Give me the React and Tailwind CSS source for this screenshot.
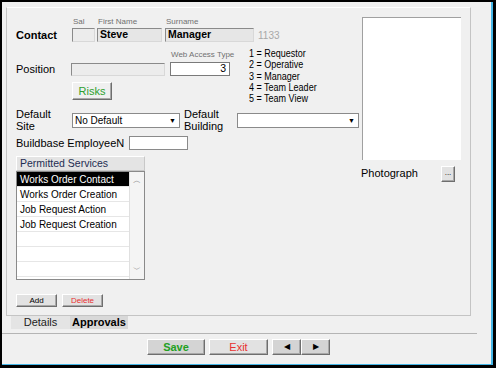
import React from "react";

const font = { fontFamily: '"Liberation Sans", Arial, sans-serif' };

function Sunken({ className = "", children }) {
  return (
    <div
      className={`border border-t-[#8a8a8a] border-l-[#8a8a8a] border-r-[#d8d8d8] border-b-[#d8d8d8] ${className}`}
    >
      {children}
    </div>
  );
}

function Combo({ className = "", value = "" }) {
  return (
    <div className={`flex items-center justify-between border border-[#8a8a8a] bg-white pl-[2px] pr-[3px] text-[10px] ${className}`}>
      <span>{value}</span>
      <span className="text-[7px] leading-none">▼</span>
    </div>
  );
}

function Btn({ className = "", children }) {
  return (
    <div
      className={`flex items-center justify-center border border-t-white border-l-white border-r-[#6e6e6e] border-b-[#6e6e6e] shadow-[inset_-1px_-1px_0_#a8a8a8] ${className}`}
    >
      {children}
    </div>
  );
}

export default function App() {
  const services = ["Works Order Contact", "Works Order Creation", "Job Request Action", "Job Request Creation", "", "", ""];

  return (
    <div style={font} className="h-[368px] w-[496px] overflow-hidden border-l-2 border-t-2 border-r-[3px] border-b-[3px] border-black bg-[#f0f0f0] text-black">
      <div className="flex h-full flex-col border-r-2 border-b border-[#45b6e6]">
        {/* main panel */}
        <div className="ml-[4px] mt-[5px] flex h-[309px] w-[465px] border border-t-white border-l-[#c4c4c4] border-r-[#c4c4c4] border-b-[#c4c4c4] pl-[9px] pt-[9px]">
          {/* left form */}
          <div className="flex w-[345px] flex-col">
            <div className="flex h-[11px] items-start text-[8px] leading-[10px] text-[#707070]">
              <div className="w-[57px]" />
              <div className="w-[25px]">Sal</div>
              <div className="w-[68px]">First Name</div>
              <div>Surname</div>
            </div>
            <div className="flex h-[14px] items-center">
              <div className="w-[56px] text-[11px] font-bold">Contact</div>
              <Sunken className="h-[14px] w-[23px] bg-[#ececec]" />
              <Sunken className="ml-[2px] flex h-[14px] w-[65px] items-center bg-[#e6e6e6] pl-[2px] text-[10.5px] font-bold">Steve</Sunken>
              <Sunken className="ml-[3px] flex h-[14px] w-[89px] items-center bg-[#e6e6e6] pl-[2px] text-[10.5px] font-bold">Manager</Sunken>
              <div className="ml-[4px] text-[10px] text-[#a8a8a8]">1133</div>
            </div>

            <div className="mt-[6px] flex">
              <div className="flex w-[233px] flex-col">
                <div className="h-[14px] pl-[155px] pt-[2px] text-[8px] leading-[10px] text-[#707070]">Web Access Type</div>
                <div className="flex h-[14px] items-center">
                  <div className="w-[55px] text-[11px]">Position</div>
                  <Sunken className="h-[13px] w-[94px] bg-[#ececec]" />
                  <div className="ml-[5px] flex h-[14px] w-[60px] items-center justify-end border border-[#7a7a7a] bg-white pr-[3px] text-[10.5px]">3</div>
                </div>
                <Btn className="ml-[56px] mt-[6px] h-[18px] w-[40px] bg-[#f0f0f0] text-[11px] text-[#2ea02e]">Risks</Btn>
              </div>
              <div className="origin-left scale-x-[0.9] whitespace-nowrap text-[10px] leading-[11.3px]">
                <div>1 = Requestor</div>
                <div>2 = Operative</div>
                <div>3 = Manager</div>
                <div>4 = Team Leader</div>
                <div>5 = Team View</div>
              </div>
            </div>

            <div className="mt-[3px] flex items-start">
              <div className="w-[56px] pt-[1px] text-[11px] leading-[12px]">
                Default
                <br />
                Site
              </div>
              <Combo className="mt-[6px] h-[15px] w-[108px]" value="No Default" />
              <div className="ml-[4px] w-[53px] pt-[1px] text-[11px] leading-[12px]">
                Default
                <br />
                Building
              </div>
              <Combo className="mt-[6px] h-[15px] w-[122px]" />
            </div>

            <div className="mt-[4px] flex h-[14px] items-center">
              <div className="w-[113px] text-[11px]">Buildbase EmployeeN</div>
              <div className="h-[14px] w-[59px] border border-[#8a8a8a] bg-white" />
            </div>

            <div className="mt-[6px] flex h-[15px] w-[129px] items-center border border-t-white border-l-white border-r-[#c8c8c8] border-b-[#c8c8c8] bg-[#e4e4e4] pl-[3px] text-[10.5px] text-[#1e2d52]">
              Permitted Services
            </div>
            <div className="flex h-[109px] w-[129px] border border-[#8a8a8a] bg-white">
              <div className="flex flex-1 flex-col">
                {services.map((s, i) => (
                  <div
                    key={i}
                    className={`flex h-[15px] items-center border-b border-[#e6e6e6] pl-[3px] text-[10px] ${i === 0 ? "bg-black text-white" : ""}`}
                  >
                    {s}
                  </div>
                ))}
              </div>
              <div className="flex w-[15px] flex-col items-center justify-between border-l border-[#e0e0e0] bg-[#f4f4f4] py-[3px] text-[8px] text-[#8a8a8a]">
                <span>︿</span>
                <span>﹀</span>
              </div>
            </div>

            <div className="mt-[14px] flex gap-[5px]">
              <Btn className="h-[13px] w-[41px] bg-[#e2e2e2] text-[8px]">Add</Btn>
              <Btn className="h-[13px] w-[41px] bg-[#e2e2e2] text-[8px] text-[#e83030]">Delete</Btn>
            </div>
          </div>

          {/* photo column */}
          <div className="ml-[1px] flex flex-col">
            <div className="h-[143px] w-[99px] border-l border-t border-[#a0a0a0] bg-white" />
            <div className="mt-[6px] flex items-start">
              <div className="ml-[-1px] mt-[-1px] w-[80px] text-[11px]">Photograph</div>
              <Btn className="h-[16px] w-[14px] bg-[#e2e2e2] pb-[3px] text-[8px] leading-none">...</Btn>
            </div>
          </div>
        </div>

        {/* tabs */}
        <div className="ml-[9px] flex h-[13px]">
          <div className="flex w-[59px] items-center justify-center bg-[#e4e4e4] text-[11px] text-[#222]">Details</div>
          <div className="flex w-[58px] items-center justify-center bg-[#d8d8d8] text-[11px] font-bold">Approvals</div>
        </div>

        <div className="mt-[4px] h-px w-[475px] bg-[#b4b4b4]" />

        {/* bottom buttons */}
        <div className="ml-[145px] mt-[5px] flex h-[16px] gap-[4px]">
          <Btn className="w-[58px] bg-[#d4d4d4] text-[11px] font-bold text-[#22a022]">Save</Btn>
          <Btn className="w-[59px] bg-[#e2e2e2] text-[11px] text-[#e83030]">Exit</Btn>
          <div className="flex">
            <Btn className="w-[29px] bg-[#d4d4d4] text-[8px]">◀</Btn>
            <Btn className="w-[29px] bg-[#d4d4d4] text-[8px]">▶</Btn>
          </div>
        </div>
      </div>
    </div>
  );
}
